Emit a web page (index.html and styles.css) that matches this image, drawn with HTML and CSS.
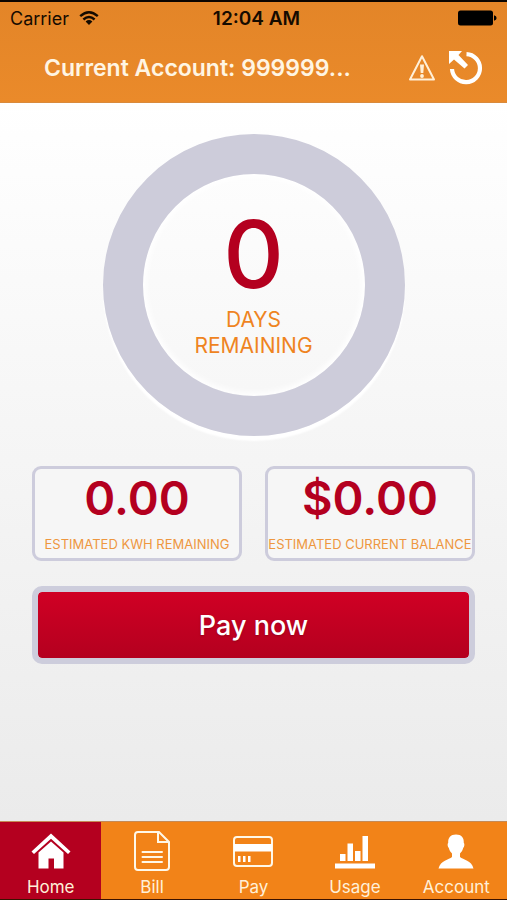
FILE: index.html
```html
<!DOCTYPE html>
<html lang="en">
<head>
<meta charset="utf-8">
<meta name="viewport" content="width=device-width, initial-scale=1">
<title>Current Account</title>
<link rel="stylesheet" href="styles.css">
</head>
<body>
<header class="header">
  <div class="status">
    <div class="carrier">
      <span>Carrier</span>
      <svg width="20" height="16" viewBox="0 0 20 16" aria-hidden="true">
        <g fill="none" stroke="#150b00" stroke-width="2.4">
          <path d="M1.2 6.2Q10-1.8 18.8 6.2"/>
          <path d="M4.4 9.5Q10 4.4 15.6 9.5"/>
        </g>
        <path fill="#150b00" d="M6.6 11.4Q10 8.6 13.4 11.4L10 15Z"/>
      </svg>
    </div>
    <span class="time">12:04 AM</span>
    <svg class="battery" width="39" height="16" viewBox="0 0 39 16" role="img" aria-label="Battery full">
      <rect x="0" y="0.5" width="35" height="15" rx="2.5"/>
      <path d="M36 5.2Q38.6 5.8 38.6 8T36 10.800Z"/>
    </svg>
  </div>
  <div class="titlebar">
    <h1 class="title">Current Account: 999999...</h1>
    <button class="icon-button" type="button" aria-label="Alerts">
      <svg width="28" height="28" viewBox="0 0 28 28">
        <path d="M14 2.200 26 25.500H2Z" fill="none" stroke="#fff0d8" stroke-width="2" stroke-linejoin="round"/>
        <path d="M12 10.500h4l-.7 8.500h-2.600z" fill="#fff0d8"/>
        <circle cx="14" cy="22" r="1.900" fill="#fff0d8"/>
      </svg>
    </button>
    <button class="icon-button" type="button" aria-label="Refresh">
      <svg width="34" height="34" viewBox="0 0 34 34">
        <path d="M17.500 3.200A14 14 0 1 1 3 18" fill="none" stroke="#fff" stroke-width="4.200"/>
        <path d="M0 0H13L9.500 4 19 14 15.500 17.500 5 8.500 0 13Z" fill="#fff"/>
      </svg>
    </button>
  </div>
</header>
<main class="content">
  <section class="ring">
    <strong class="days">0</strong>
    <span class="days-label">DAYS<br>REMAINING</span>
  </section>
  <div class="stats">
    <section class="stat">
      <strong class="value">0.00</strong>
      <span class="caption">ESTIMATED KWH REMAINING</span>
    </section>
    <section class="stat">
      <strong class="value">$0.00</strong>
      <span class="caption">ESTIMATED CURRENT BALANCE</span>
    </section>
  </div>
  <button class="pay" type="button">Pay now</button>
</main>
<nav class="tabs">
  <a class="tab active" href="#home" aria-current="page">
    <svg width="40" height="40" viewBox="0 0 40 40" fill="#fff" aria-hidden="true">
      <path d="M20 2.500 39.500 20.500 37 23 20 7.800 3 23 .5 20.500Z"/>
      <path d="M20 10.500 32.500 21.500V37.500H23V27.500H17.500V37.500H7.500V21.500Z"/>
    </svg>
    <span>Home</span>
  </a>
  <a class="tab" href="#bill">
    <svg width="40" height="40" viewBox="0 0 40 40" fill="none" stroke="#fff8e8" stroke-width="2" aria-hidden="true">
      <path d="M6 1H27L37 11V36Q37 39 34 39H6Q3 39 3 36V4Q3 1 6 1Z"/>
      <path d="M26 1V11H37"/>
      <path d="M10.500 21H30M10.500 26H30M10.500 31H30" stroke-linecap="round"/>
    </svg>
    <span>Bill</span>
  </a>
  <a class="tab" href="#pay">
    <svg width="40" height="40" viewBox="0 0 40 40" aria-hidden="true">
      <rect x="1" y="6" width="38" height="29" rx="3" fill="none" stroke="#fff8e8" stroke-width="2"/>
      <path fill="#fff" d="M1 13H39V20.500H1ZM5 25h2.500v6H5ZM10 25h2.500v6H10ZM15 25h2.500v6H15Z"/>
    </svg>
    <span>Pay</span>
  </a>
  <a class="tab" href="#usage">
    <svg width="40" height="40" viewBox="0 0 40 40" fill="#fff" aria-hidden="true">
      <path d="M0 32.500H40V37.500H0ZM5 23h5.500v7H5ZM12.500 12.500H18V30H12.500ZM20 20h5.500v10H20ZM27.500 5H33V30H27.500Z"/>
    </svg>
    <span>Usage</span>
  </a>
  <a class="tab" href="#account">
    <svg width="40" height="40" viewBox="0 0 40 40" fill="#fff" aria-hidden="true">
      <path d="M20 3.500C25.500 3.500 28 6.500 27.800 12C28.800 12.500 28.500 15.500 27.200 17C26.500 19.500 25.500 21 24 22.500V26C27 29 35.500 29 37.500 37.500H2.500C4.500 29 13 29 16 26V22.500C14.500 21 13.500 19.500 12.800 17C11.500 15.500 11.200 12.500 12.200 12C12 6.500 14.500 3.500 20 3.500Z"/>
    </svg>
    <span>Account</span>
  </a>
</nav>
</body>
</html>
```
FILE: styles.css
```css
* {
  box-sizing: border-box;
}

body {
  margin: 0;
  min-height: 100vh;
  display: flex;
  flex-direction: column;
  font-family: Inter, "Liberation Sans", sans-serif;
  background: linear-gradient(#ffffff 100px, #ebebeb 820px);
}

button {
  font: inherit;
  cursor: pointer;
}

.header {
  border-top: 2px solid #0a0400;
  border-bottom: 1px solid #d98a3c;
  background: linear-gradient(#e38528, #ea8a2a);
}

.status {
  display: grid;
  grid-template-columns: 1fr auto 1fr;
  align-items: center;
  height: 32px;
  padding: 0 10px;
  font-size: 18px;
  color: #150b00;
}

.carrier {
  display: flex;
  align-items: center;
  gap: 10px;
}

.time {
  padding-left: 6px;
  font-size: 19px;
  font-weight: 600;
}

.battery {
  justify-self: end;
}

.titlebar {
  display: flex;
  align-items: center;
  gap: 13px;
  height: 68px;
  padding: 0 24px;
}

.title {
  flex: 1;
  margin: 0;
  padding-left: 20px;
  font-size: 23px;
  font-weight: 600;
  white-space: nowrap;
  color: #fff5e3;
}

.icon-button {
  display: flex;
  padding: 0;
  border: 0;
  background: none;
}

.content {
  flex: 1;
  display: flex;
  flex-direction: column;
  align-items: center;
  padding: 31px 32px 24px;
}

.ring {
  display: flex;
  flex-direction: column;
  align-items: center;
  width: 302px;
  height: 302px;
  padding-top: 27px;
  border: 40px solid #cdccda;
  border-radius: 50%;
  box-shadow: 0 5px 2px #ffffff, inset 0 0 6px 3px #ffffff;
}

.days {
  font-size: 94px;
  font-weight: 500;
  line-height: 106px;
  color: #b4001f;
}

.days-label {
  font-size: 21px;
  line-height: 26px;
  text-align: center;
  color: #ef841f;
}

.stats {
  display: grid;
  grid-template-columns: 1fr 1fr;
  gap: 23px;
  width: 100%;
  margin: 30px 0 25px;
}

.stat {
  display: flex;
  flex-direction: column;
  align-items: center;
  min-width: 0;
  height: 95px;
  border: 3px solid #cdccdc;
  border-radius: 9px;
  background: #f6f6f6;
}

.value {
  font-size: 47px;
  font-weight: 600;
  line-height: 58px;
  color: #b4001f;
}

.caption {
  margin-top: 8px;
  font-size: 13px;
  line-height: 18px;
  white-space: nowrap;
  color: #ee973f;
}

.pay {
  width: 100%;
  height: 78px;
  border: 6px solid #cdcddc;
  border-radius: 10px;
  background: linear-gradient(#d00024, #b4001f) padding-box;
  font-size: 27px;
  font-weight: 500;
  color: #ffffff;
  text-shadow: 0 1px 2px #70001480;
}

.tabs {
  display: grid;
  grid-template-columns: repeat(5, 1fr);
  border-top: 1px solid #c58a55;
  border-bottom: 1px solid #3a1200;
  background: #f28318;
}

.tab {
  display: flex;
  flex-direction: column;
  align-items: center;
  gap: 4px;
  height: 77px;
  padding-top: 9px;
  font-size: 17px;
  line-height: 24px;
  text-decoration: none;
  color: #fff0d8;
}

.active {
  background: #b4001f;
}
```
